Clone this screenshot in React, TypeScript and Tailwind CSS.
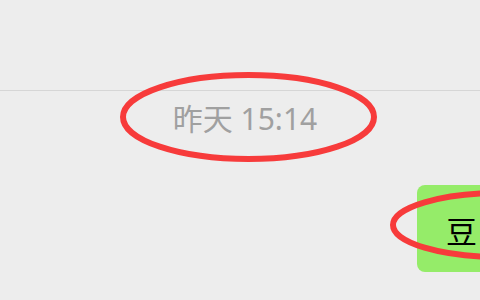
import React from "react";

export default function App() {
  return (
    <div
      className="relative w-[480px] h-[300px] overflow-hidden bg-[#ededed]"
      style={{ fontFamily: '"Noto Sans", "Noto Sans CJK SC", sans-serif' }}
    >
      <div className="h-[91px] border-b border-[#d6d6d6]" />
      <div className="flex flex-col">
        <div className="pt-[13px] flex justify-center">
          <span className="text-[30px] leading-[30px] text-[#a0a0a0] pl-[10px]">昨天 15:14</span>
        </div>
        <div className="mt-[51px] flex justify-end">
          <div className="w-[123px] -mr-[60px] h-[87px] shrink-0 rounded-[8px] bg-[#95ec69] pl-[29px] pt-[31px]">
            <span className="text-[31px] leading-[31px] text-black">豆</span>
          </div>
        </div>
      </div>
      <svg
        className="absolute left-0 top-0 pointer-events-none"
        width="480"
        height="300"
        viewBox="0 0 480 300"
      >
        <ellipse cx="248.5" cy="117" rx="125.5" ry="42" fill="none" stroke="#f73b3b" strokeWidth="6" />
        <ellipse cx="501" cy="225" rx="108" ry="32" fill="none" stroke="#f73b3b" strokeWidth="6" />
      </svg>
    </div>
  );
}
